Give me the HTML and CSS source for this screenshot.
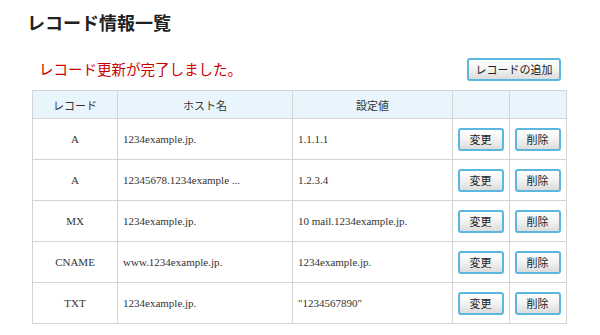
FILE: index.html
```html
<!DOCTYPE html>
<html lang="ja">

<head>
    <meta charset="UTF-8">
    <title>レコード情報一覧</title>
    <link rel="stylesheet" href="styles.css">
</head>

<body>
    <div id="page">
        <h1 class="title">レコード情報一覧</h1>
        <div class="toolbar">
            <p class="message">レコード更新が完了しました。</p>
            <button class="btn btn-add">レコードの追加</button>
        </div>
        <table class="records">
            <colgroup>
                <col class="c-type">
                <col class="c-host">
                <col class="c-value">
                <col class="c-btn">
                <col class="c-btn">
            </colgroup>
            <thead>
                <tr>
                    <th>レコード</th>
                    <th>ホスト名</th>
                    <th>設定値</th>
                    <th></th>
                    <th></th>
                </tr>
            </thead>
            <tbody>
                <tr>
                    <td class="type">A</td>
                    <td>1234example.jp.</td>
                    <td>1.1.1.1</td>
                    <td class="act"><button class="btn">変更</button></td>
                    <td class="act"><button class="btn">削除</button></td>
                </tr>
                <tr>
                    <td class="type">A</td>
                    <td>12345678.1234example ...</td>
                    <td>1.2.3.4</td>
                    <td class="act"><button class="btn">変更</button></td>
                    <td class="act"><button class="btn">削除</button></td>
                </tr>
                <tr>
                    <td class="type">MX</td>
                    <td>1234example.jp.</td>
                    <td>10 mail.1234example.jp.</td>
                    <td class="act"><button class="btn">変更</button></td>
                    <td class="act"><button class="btn">削除</button></td>
                </tr>
                <tr>
                    <td class="type">CNAME</td>
                    <td>www.1234example.jp.</td>
                    <td>1234example.jp.</td>
                    <td class="act"><button class="btn">変更</button></td>
                    <td class="act"><button class="btn">削除</button></td>
                </tr>
                <tr>
                    <td class="type">TXT</td>
                    <td>1234example.jp.</td>
                    <td>"1234567890"</td>
                    <td class="act"><button class="btn">変更</button></td>
                    <td class="act"><button class="btn">削除</button></td>
                </tr>
            </tbody>
        </table>
    </div>
</body>

</html>
```

FILE: styles.css
```css
* {
    margin: 0;
    padding: 0;
    box-sizing: border-box;
}

body {
    background: #fff;
    font-family: "Liberation Serif", "Noto Sans CJK JP", serif;
    color: #222;
}

#page {
    padding: 9px 0 0 27px;
    width: 567px;
}

.title {
    font-family: "Noto Sans CJK JP", sans-serif;
    font-size: 18px;
    font-weight: bold;
    line-height: 26px;
    color: #222;
}

.toolbar {
    display: flex;
    justify-content: space-between;
    align-items: center;
    margin-top: 23px;
    padding-left: 12px;
    height: 22px;
}

.message {
    font-family: "Noto Sans CJK JP", sans-serif;
    font-size: 14.5px;
    color: #cc0000;
    line-height: 22px;
}

.btn {
    font-family: "Noto Sans CJK JP", sans-serif;
    font-size: 11px;
    color: #222;
    height: 23px;
    width: 46px;
    border: 2px solid #5bb7dd;
    border-radius: 3px;
    background: linear-gradient(#ffffff, #f4f4f4 45%, #dcdcdc);
    cursor: pointer;
}

.btn-add {
    width: 94px;
    margin-right: 6px;
}

.records {
    border-collapse: collapse;
    margin-top: 10px;
    margin-left: 5px;
    width: 535px;
    font-size: 11px;
}

.c-type { width: 85px; }
.c-host { width: 175px; }
.c-value { width: 160px; }
.c-btn { width: 57px; }

.records th,
.records td {
    border: 1px solid #d4d4d4;
}

.records th {
    background: #e8f5fd;
    font-family: "Noto Sans CJK JP", sans-serif;
    font-size: 11px;
    font-weight: normal;
    color: #333;
    height: 28px;
}

.records td {
    height: 41px;
    padding: 0 5px;
    color: #333;
}

.records td.type {
    text-align: center;
}

.records td.act {
    text-align: center;
    padding: 0 1px 0 0;
}
```
